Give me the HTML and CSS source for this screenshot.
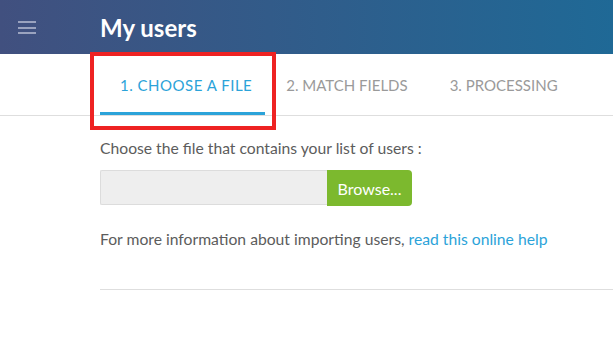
FILE: index.html
```html
<!DOCTYPE html>
<html lang="en">
<head>
  <meta charset="UTF-8" />
  <title>My users</title>
  <link rel="stylesheet" href="styles.css">
</head>
<body>
  <div class="topbar">
    <div class="menu-btn">
      <span></span><span></span><span></span>
    </div>
    <h1 class="title">My users</h1>
  </div>

  <div class="steps">
    <div class="step active">1. CHOOSE A FILE</div>
    <div class="step">2. MATCH FIELDS</div>
    <div class="step">3. PROCESSING</div>
    <!-- highlight frame -->
    <div class="highlight"></div>
  </div>

  <div class="content">
    <p class="label">Choose the file that contains your list of users :</p>
    <div class="file-row">
      <div class="file-input"></div>
      <button class="browse-btn">Browse...</button>
    </div>
    <p class="help">For more information about importing users, <a href="#">read this online help</a></p>
    <div class="divider"></div>
  </div>
</body>
</html>
```

FILE: styles.css
```css
body {
  margin: 0;
  font-family: Lato, "Open Sans", sans-serif;
  background: #fff;
  color: #5c5c5c;
}

.topbar {
  height: 54px;
  display: flex;
  align-items: center;
  background: linear-gradient(to right, #41507f, #1f6996);
}
.menu-btn {
  width: 100px;
  padding-left: 18px;
  box-sizing: border-box;
  display: flex;
  flex-direction: column;
  gap: 3.5px;
  margin-top: 1px;
}
.menu-btn span {
  display: block;
  width: 18px;
  height: 2px;
  background: #9aa3bf;
}
.title {
  margin: 0;
  font-size: 24px;
  font-weight: 700;
  color: #fff;
  margin-top: 1px;
}

/* etapes */
.steps {
  position: relative;
  display: flex;
  height: 61px;
  padding-left: 100px;
  border-bottom: 1px solid #dedede;
}
.step {
  height: 61px;
  box-sizing: border-box;
  padding: 0 21px;
  display: flex;
  align-items: center;
  font-size: 15px;
  color: #9a9a9a;
}
.step.active {
  color: #2ba3d9;
  border-bottom: 3px solid #2ba3d9;
  padding: 3px 13px 0 20px;
  letter-spacing: 0.5px;
}
.highlight {
  position: absolute;
  left: 90px;
  top: -2px;
  width: 186px;
  height: 78px;
  box-sizing: border-box;
  border: 4px solid #ee2222;
}

.content {
  padding-left: 100px;
  padding-top: 21px;
}
.label {
  margin: 0;
  font-size: 15.7px;
  line-height: 22px;
}
.file-row {
  display: flex;
  margin-top: 11px;
}
.file-input {
  width: 227px;
  height: 35px;
  box-sizing: border-box;
  background: #eee;
  border: 1px solid #dcdcdc;
  border-right: none;
  border-radius: 2px 0 0 2px;
}
.browse-btn {
  width: 85px;
  height: 36px;
  border: none;
  background: #7cb92e;
  color: #fff;
  font-family: inherit;
  font-size: 16px;
  border-radius: 0 4px 4px 0;
  padding: 0;
}
.help {
  margin: 22px 0 0;
  font-size: 15.7px;
  line-height: 22px;
}
.help a {
  color: #2ba3d9;
  text-decoration: none;
}
.divider {
  margin-top: 39px;
  border-top: 1px solid #dedede;
}
```
